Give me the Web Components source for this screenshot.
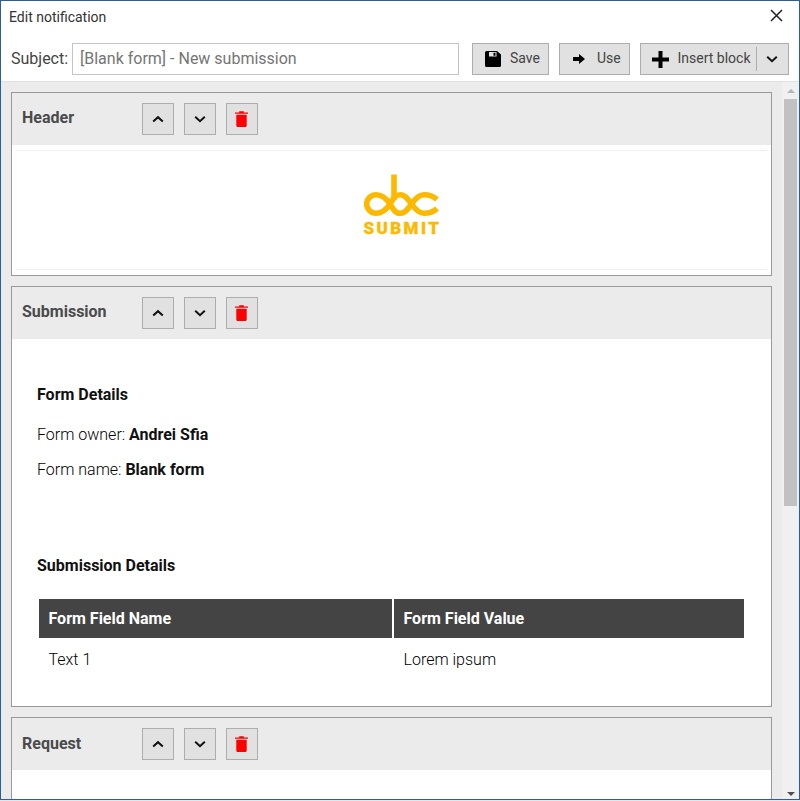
<!DOCTYPE html>
<html><head><meta charset="utf-8">
<style>
html,body{margin:0;padding:0;background:#e6e6e6;height:801px;overflow:hidden}
body{font-family:Roboto,"Liberation Sans",sans-serif}
</style></head><body>
<template id="t-btn"><style>
:host{display:inline-flex;box-sizing:border-box;height:32px;align-items:center;justify-content:center;background:#e1e1e1;border:1px solid #adadad;font:14px Roboto,sans-serif;color:#444}
:host([square]){width:32px}
:host([start]){justify-content:flex-start}
</style><slot></slot></template>
<template id="t-panel"><style>
:host{display:block;box-sizing:border-box;border:1px solid #999;background:#fff;margin-bottom:10px;flex:none}
.head{height:52px;background:#ebebeb;display:flex;align-items:center;padding-left:10px;gap:10px}
.title{width:110px;font:700 16px Roboto,sans-serif;color:#4a4a4a;padding-bottom:4px}
:host([low]) .title{padding-bottom:2px}
svg{display:block}
</style><div class="head"><div class="title"></div>
<x-btn square><svg width="14" height="14" viewBox="0 0 14 14"><path d="M2.200 9.600 7 5.200l4.800 4.400" fill="none" stroke="#111" stroke-width="2"/></svg></x-btn>
<x-btn square><svg width="14" height="14" viewBox="0 0 14 14"><path d="M2.200 4.800 7 9.200l4.800-4.400" fill="none" stroke="#111" stroke-width="2"/></svg></x-btn>
<x-btn square style="padding-right:1px;box-sizing:border-box"><svg width="13" height="16" viewBox="0 0 13 16"><path d="M0 1.500h13v1.200H0zM4.200 .3h4.600v1.200H4.200zM1.300 3.700h10.400v10.800c0 .9-.5 1.500-1.400 1.500H2.700c-.9 0-1.400-.6-1.400-1.500z" fill="#f00"/></svg></x-btn>
</div><slot></slot></template>
<template id="t-bar"><style>
:host{display:flex;flex:none;box-sizing:border-box;width:17px;background:#f0f0f0;flex-direction:column;align-items:center;padding-top:7px;position:relative}
.up{width:0;height:0;border:4px solid transparent;border-top:0;border-bottom:4px solid #b5b5b5;margin-bottom:6px}
.th{width:13px;height:407px;background:#c1c1c1}
.dn{position:absolute;bottom:3px;left:5px;width:0;height:0;border:4px solid transparent;border-bottom:0;border-top:4px solid #505050}
</style><div class="up"></div><div class="th"></div><div class="dn"></div></template>
<template id="t-win"><style>
:host{display:flex;flex-direction:column;box-sizing:border-box;width:800px;height:800px;border:1px solid #2b5ca8;background:#fff;overflow:hidden;color:#222}
.top{height:28px;display:flex;align-items:center;justify-content:space-between;padding:0 16px 0 8px;flex:none;font:14px Roboto,sans-serif;color:#333}
.top span{padding-top:4px}
.tb{flex:none;height:53px;box-sizing:border-box;padding-top:14px;display:flex;align-items:flex-start;border-bottom:1px solid #e0e0e0;padding-left:10px;font:16px Roboto,sans-serif;color:#444}
.lbl{line-height:32px;width:61px}
.inp{box-sizing:border-box;width:387px;height:32px;border:1px solid #c4c4c4;line-height:30px;padding-left:7px;color:#757575;margin-right:13px}
.tb x-btn{margin-right:10px}
svg{display:block}
.save{width:77px;padding-left:12px;box-sizing:border-box}.use{width:71px;padding-left:13px;box-sizing:border-box}.ins{width:149px;padding-left:11px;box-sizing:border-box}
.tx{padding-bottom:2px}
.sep{width:1px;height:24px;background:#adadad;margin:0 8px 0 5px}
.main{flex:1;display:flex;background:#ebebeb;min-height:0}
.scroll{flex:1;padding:10px 10px 0 10px;overflow:hidden;min-width:0;display:flex;flex-direction:column}
</style>
<div class="top"><span>Edit notification</span><svg width="13" height="13" viewBox="0 0 13 13"><path d="M1 1l11 11M12 1 1 12" stroke="#222" stroke-width="1.500" fill="none"/></svg></div>
<div class="tb"><span class="lbl">Subject:</span><div class="inp">[Blank form] - New submission</div>
<x-btn class="save" start><svg style="margin-right:9px" width="16" height="16" viewBox="0 0 16 16"><path fill-rule="evenodd" d="M1.500 0H12l4 3.500v11a1.500 1.500 0 0 1-1.500 1.500h-13A1.500 1.500 0 0 1 0 14.500v-13A1.500 1.500 0 0 1 1.500 0zM4 1v4.500h7.500V1zM8.500 1.800h2v3h-2z" fill="#000"/></svg><span class="tx">Save</span></x-btn>
<x-btn class="use" start><svg style="margin-right:12px" width="12" height="10" viewBox="0 0 12 10"><path d="M0 3h6V0l6 5-6 5V7H0z" fill="#000"/></svg><span class="tx">Use</span></x-btn>
<x-btn class="ins" start><svg style="margin-right:8.500px" width="17" height="17" viewBox="0 0 17 17"><path d="M6.500 0h4v6.500H17v4h-6.500V17h-4v-6.500H0v-4h6.500z" fill="#000"/></svg><span class="tx">Insert block</span><span class="sep"></span><svg width="14" height="14" viewBox="0 0 14 14"><path d="M2.200 4.800 7 9.200l4.800-4.400" fill="none" stroke="#111" stroke-width="2"/></svg></x-btn>
</div>
<div class="main"><div class="scroll"><slot></slot></div><x-bar></x-bar></div>
</template>
<template id="t-logo"><style>
:host{display:block;box-sizing:border-box;height:130px;padding:5px 4px 0 4px}
.in{height:120px;border-top:1px solid #efefef;border-bottom:1px solid #efefef;display:flex;justify-content:center;padding:23px 0 0 20px;box-sizing:border-box}
.lg{width:76px;display:flex;flex-direction:column;align-items:flex-start}
svg{display:block}
.t{font:900 17px/16px Roboto,sans-serif;color:#fdb900;letter-spacing:2.400px;margin-top:2px;white-space:nowrap;-webkit-text-stroke:.3px #fdb900}
</style><div class="in"><div class="lg"><svg width="76" height="44" viewBox="0 0 76 44"><g fill="none" stroke="#fdb900" stroke-width="5.600"><path d="M30 .500V26"/><path d="M26 30C22.500 24.500 18 20.700 12 20.700a9.300 9.300 0 0 0 0 18.600C18 39.300 22.500 35.500 26 30 29.500 24.500 31 20.700 36.500 20.700 41 20.700 44 25 47.500 30 51 35 54.500 39.300 60 39.300 65 39.300 69.500 38 73 34.500"/><path d="M26 30C29.500 35.500 31 39.300 36.500 39.300 41 39.300 44 35 47.500 30 51 25 54.500 20.700 60 20.700 65 20.700 69.500 22 73 25.500"/></g></svg><div class="t">SUBMIT</div></div></div></template>
<template id="t-sub"><style>
:host{display:block;height:367px;box-sizing:border-box;padding:46px 25px 0 25px;font:16px/1.2 Roboto,sans-serif;color:#000;font-weight:300}
b{font-weight:700;color:#111}
p{margin:0}
.p1{margin-bottom:21px}.p2{margin-bottom:16px}.p3{margin-bottom:76px}.p4{margin-bottom:24px}
.t{display:grid;grid-template-columns:353px 350px;column-gap:2px;margin-left:2px}
.th{background:#444;color:#fff;font-weight:700;height:39px;line-height:39px;padding-left:9.500px;box-sizing:border-box}
.td{padding-left:9.500px;height:44px;line-height:44px}
</style><p class="p1"><b>Form Details</b></p><p class="p2">Form owner: <b>Andrei Sfia</b></p><p class="p3">Form name: <b>Blank form</b></p><p class="p4"><b>Submission Details</b></p>
<div class="t"><div class="th">Form Field Name</div><div class="th">Form Field Value</div><div class="td">Text 1</div><div class="td">Lorem ipsum</div></div></template>
<x-win>
<x-panel name="Header"><x-logo></x-logo></x-panel>
<x-panel name="Submission"><x-sub></x-sub></x-panel>
<x-panel name="Request" low><div style="height:200px"></div></x-panel>
</x-win>
<script>
function def(tag,tpl,init){customElements.define(tag,class extends HTMLElement{constructor(){super();const s=this.attachShadow({mode:'open'});s.appendChild(document.getElementById(tpl).content.cloneNode(true));}connectedCallback(){if(init)init(this)}});}
def('x-btn','t-btn');def('x-bar','t-bar');def('x-win','t-win');def('x-sub','t-sub');def('x-logo','t-logo');
def('x-panel','t-panel',e=>{e.shadowRoot.querySelector('.title').textContent=e.getAttribute('name')});
</script>
</body></html>
